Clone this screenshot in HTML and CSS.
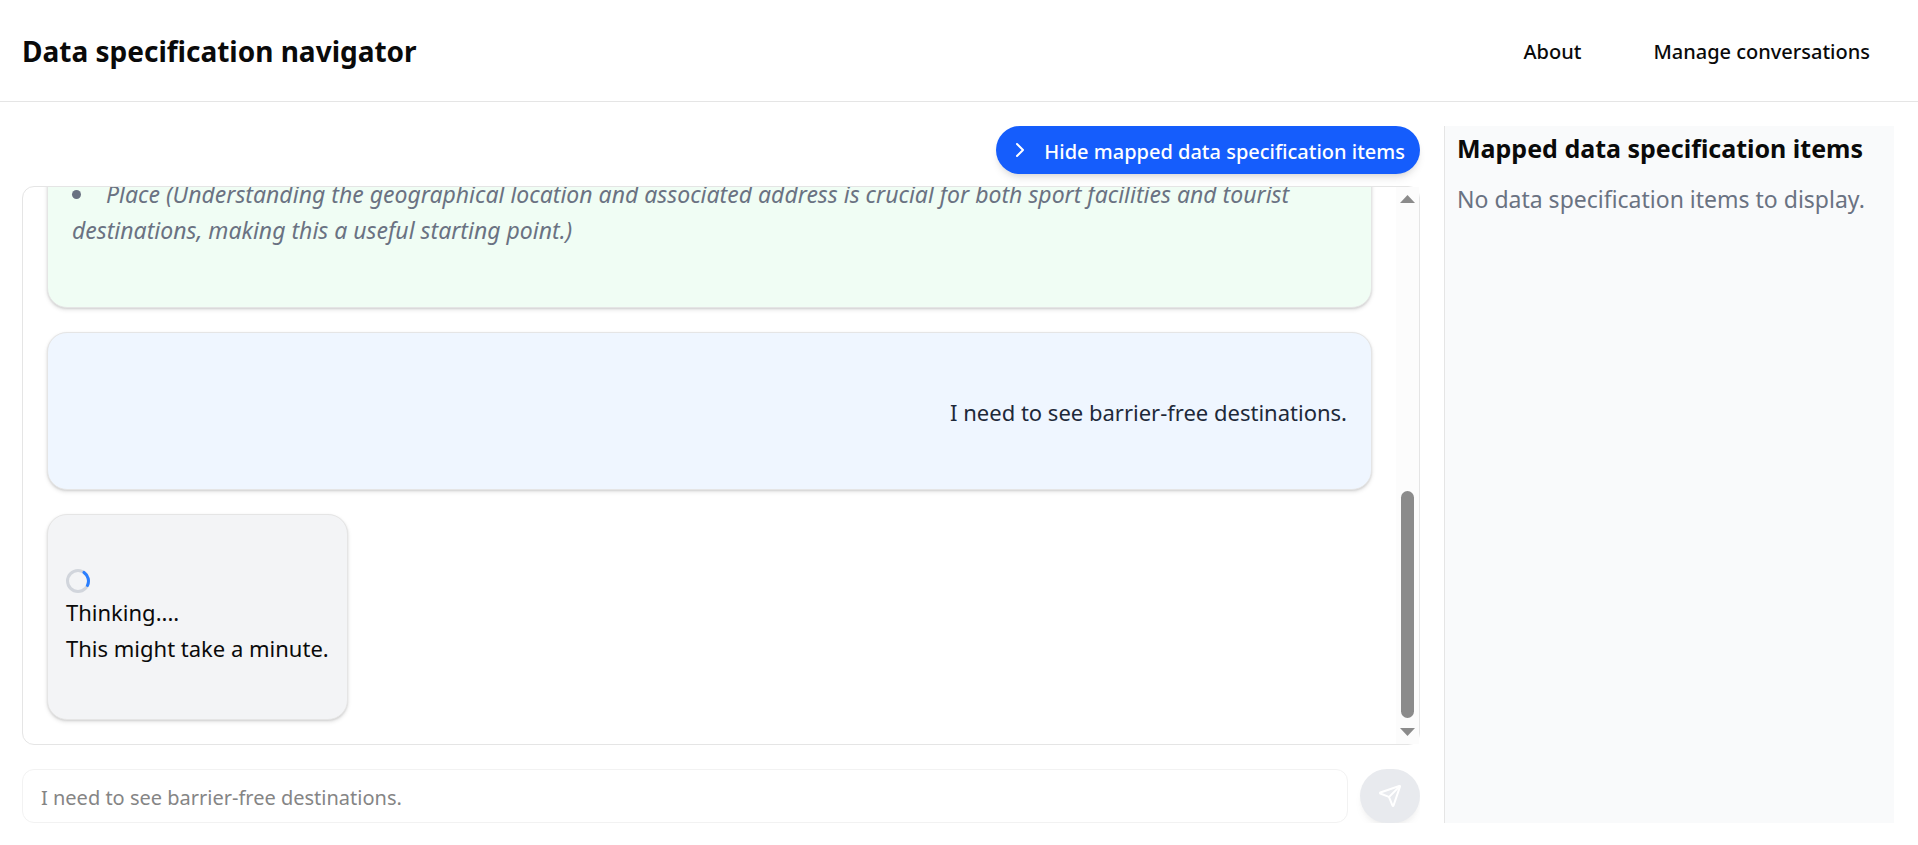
FILE: index.html
```html
<!DOCTYPE html>
<html lang="en">
<head>
<meta charset="utf-8">
<title>Data specification navigator</title>
<link rel="stylesheet" href="styles.css">
</head>
<body>
<header class="topbar">
  <h1 class="brand">Data specification navigator</h1>
  <nav class="nav">
    <a class="nav-link" href="#about">About</a>
    <a class="nav-link" href="#conversations">Manage conversations</a>
  </nav>
</header>
<main class="layout">
  <section class="chat">
    <button class="toggle" type="button">
      <svg class="toggle-icon" viewBox="0 0 24 24" aria-hidden="true"><path d="m9 18 6-6-6-6"/></svg>
      <span class="toggle-label">Hide mapped data specification items</span>
    </button>
    <div class="history">
      <div class="messages">
        <article class="message message-system">
          <ul class="suggestions">
            <li class="suggestion">Place (Understanding the geographical location and associated address is crucial for both sport facilities and tourist destinations, making this a useful starting point.)</li>
          </ul>
        </article>
        <article class="message message-user">I need to see barrier-free destinations.</article>
        <article class="message message-pending">
          <svg class="spinner" viewBox="0 0 24 24" aria-hidden="true">
            <circle class="spinner-track" cx="12" cy="12" r="10.5"/>
            <path class="spinner-arc" d="M18 3.4A10.5 10.5 0 0 1 21.5 16.4"/>
          </svg>
          <p class="line">Thinking....</p>
          <p class="line">This might take a minute.</p>
        </article>
      </div>
      <div class="scrollbar" aria-hidden="true">
        <svg class="arrow" viewBox="0 0 15 8"><path d="M7.5 0 15 8H0z"/></svg>
        <div class="track"><div class="thumb"></div></div>
        <svg class="arrow" viewBox="0 0 15 8"><path d="M0 0h15L7.5 8z"/></svg>
      </div>
    </div>
    <form class="composer">
      <input class="prompt" type="text" aria-label="Message" value="I need to see barrier-free destinations." disabled>
      <button class="send" type="button" aria-label="Send" disabled>
        <svg class="send-icon" viewBox="0 0 24 24" aria-hidden="true"><path d="M14.536 21.686a.5.5 0 0 0 .937-.024l6.5-19a.496.496 0 0 0-.635-.635l-19 6.5a.5.5 0 0 0-.024.937l7.93 3.18a2 2 0 0 1 1.112 1.11z"/><path d="m21.854 2.147-10.94 10.939"/></svg>
      </button>
    </form>
  </section>
  <aside class="panel">
    <h2 class="panel-title">Mapped data specification items</h2>
    <p class="panel-text">No data specification items to display.</p>
  </aside>
</main>
</body>
</html>
```

FILE: styles.css
```css
* {
  box-sizing: border-box;
}

body {
  margin: 0;
  height: 100vh;
  display: flex;
  flex-direction: column;
  background: #fff;
  color: #0a0a0a;
  font-family: "Noto Sans", "Liberation Sans", sans-serif;
  font-size: 22px;
  line-height: 36px;
}

h1, h2, p, ul {
  margin: 0;
  padding: 0;
}

.topbar {
  display: flex;
  align-items: center;
  justify-content: space-between;
  padding: 33px 48px 31px 22px;
  border-bottom: 1px solid #e5e5e5;
}

.brand {
  font-size: 28px;
  font-weight: 700;
  line-height: 37px;
}

.nav {
  display: flex;
  gap: 72px;
}

.nav-link {
  color: inherit;
  font-size: 20px;
  font-weight: 500;
  text-decoration: none;
}

.layout {
  flex: 1;
  min-height: 0;
  display: flex;
  gap: 24px;
  padding: 24px 24px 22px 22px;
}

.chat {
  flex: 1;
  min-width: 0;
  display: flex;
  flex-direction: column;
}

.toggle {
  align-self: flex-end;
  display: flex;
  align-items: center;
  gap: 12px;
  height: 48px;
  margin-bottom: 12px;
  padding: 0 15px 0 12px;
  border: 0;
  border-radius: 24px;
  background: #155dfc;
  color: #fff;
  box-shadow: 0 6px 9px -2px #0000001a, 0 3px 6px -3px #0000001a;
  font: 500 20px/30px "Noto Sans", "Liberation Sans", sans-serif;
}

.toggle-label {
  padding-top: 3px;
}

.toggle-icon {
  width: 24px;
  height: 24px;
  fill: none;
  stroke: currentColor;
  stroke-width: 2;
  stroke-linecap: round;
  stroke-linejoin: round;
}

.history {
  flex: 1;
  min-height: 0;
  display: flex;
  border: 1px solid #e5e5e5;
  border-radius: 12px;
}

.messages {
  flex: 1;
  min-width: 0;
  display: flex;
  flex-direction: column;
  justify-content: flex-end;
  align-items: flex-start;
  gap: 24px;
  padding: 24px;
  overflow: hidden;
  border-radius: 11px 0 0 11px;
}

.message {
  flex: none;
  padding: 61px 24px 59px;
  border: 1px solid #e5e5e5;
  border-radius: 20px;
  box-shadow: 0 2px 4px #0000001a, 0 1px 2px #0000001a;
}

.message-system {
  align-self: stretch;
  background: #f0fdf4;
  color: #6a7282;
  font-size: 23px;
  font-style: italic;
}

.message-user {
  align-self: stretch;
  background: #eff6ff;
  color: #1e2939;
  text-align: right;
}

.message-pending {
  padding: 54px 18px 53px;
  background: #f3f4f6;
}

.suggestions {
  list-style: none;
}

.suggestion::before {
  content: "";
  display: inline-block;
  width: 9px;
  height: 9px;
  margin-right: 25px;
  border-radius: 50%;
  background: currentColor;
  vertical-align: 4px;
}

.spinner {
  display: block;
  width: 24px;
  height: 24px;
  margin-bottom: 1px;
  fill: none;
  stroke-width: 3;
}

.spinner-track {
  stroke: #d1d5dc;
}

.spinner-arc {
  stroke: #2b7fff;
  stroke-linecap: round;
}

.scrollbar {
  flex: none;
  width: 23px;
  display: flex;
  flex-direction: column;
  align-items: center;
  gap: 10px;
  padding: 8px 0;
  background: #fcfcfc;
}

.arrow {
  width: 15px;
  height: 8px;
  fill: #8b8b8b;
}

.track {
  flex: 1;
  display: flex;
  flex-direction: column;
  justify-content: flex-end;
}

.thumb {
  width: 13px;
  height: 45%;
  border-radius: 7px;
  background: #8b8b8b;
}

.composer {
  display: flex;
  gap: 12px;
  margin-top: 24px;
  height: 54px;
  overflow: hidden;
}

.prompt {
  flex: 1;
  min-width: 0;
  padding: 3px 18px 0;
  border: 1px solid #f2f2f2;
  border-radius: 12px;
  background: #fff;
  color: #858585;
  font: 400 20px/30px "Noto Sans", "Liberation Sans", sans-serif;
}

.send {
  width: 60px;
  display: flex;
  align-items: center;
  justify-content: center;
  padding: 0;
  border: 0;
  border-radius: 27px;
  background: #e8eaee;
  color: #fff;
  box-shadow: 0 6px 9px -2px #0000000d, 0 3px 6px -3px #0000000d;
}

.send-icon {
  width: 24px;
  height: 24px;
  fill: none;
  stroke: currentColor;
  stroke-width: 2;
  stroke-linecap: round;
  stroke-linejoin: round;
}

.panel {
  flex: none;
  width: 450px;
  padding: 4px 12px;
  border-left: 1px solid #e5e5e5;
  background: #f9fafb;
}

.panel-title {
  margin-bottom: 15px;
  font-size: 25px;
  font-weight: 700;
  line-height: 36px;
  white-space: nowrap;
}

.panel-text {
  color: #6a7282;
  font-size: 23px;
}
```
